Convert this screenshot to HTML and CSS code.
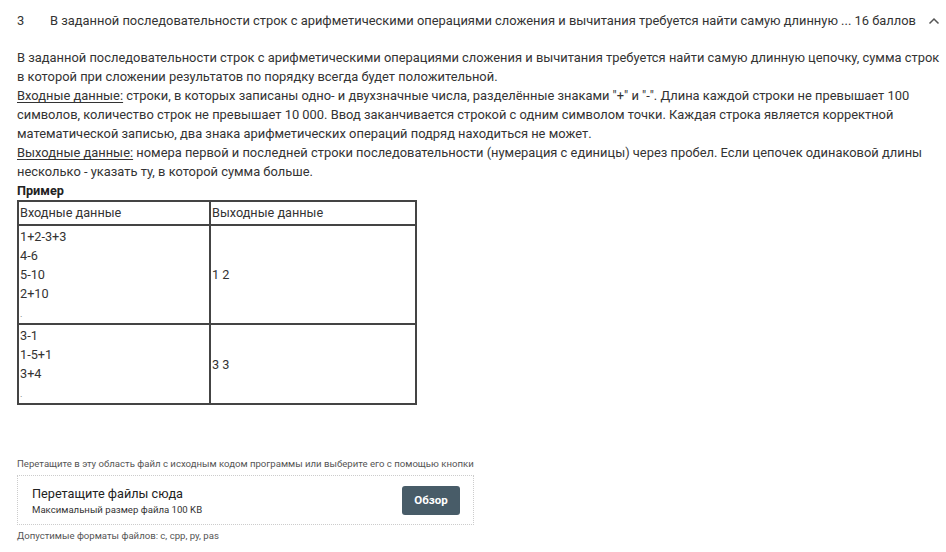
FILE: index.html
```html
<!DOCTYPE html>
<html lang="ru">
<head>
<meta charset="utf-8">
<link rel="stylesheet" href="styles.css">
</head>
<body>
<div class="task">
  <div class="task-head">
    <span class="num">3</span>
    <span class="title">В заданной последовательности строк с арифметическими операциями сложения и вычитания требуется найти самую длинную ...</span>
    <span class="score">16 баллов</span>
    <svg class="chev" width="12" height="8" viewBox="0 0 12 8"><path d="M1.5 6.5 L6 2 L10.5 6.5" fill="none" stroke="#555" stroke-width="1.5"/></svg>
  </div>
  <div class="task-body">
    <p class="text">В заданной последовательности строк с арифметическими операциями сложения и вычитания требуется найти самую длинную цепочку, сумма строк в которой при сложении результатов по порядку всегда будет положительной.<br><u>Входные данные:</u> строки, в которых записаны одно- и двухзначные числа, разделённые знаками "+" и "-". Длина каждой строки не превышает 100 символов, количество строк не превышает 10 000. Ввод заканчивается строкой с одним символом точки. Каждая строка является корректной математической записью, два знака арифметических операций подряд находиться не может.<br><u>Выходные данные:</u> номера первой и последней строки последовательности (нумерация с единицы) через пробел. Если цепочек одинаковой длины несколько - указать ту, в которой сумма больше.</p>
    <div class="example-title">Пример</div>
    <table class="example">
      <tr class="hrow"><td class="c1">Входные данные</td><td class="c2">Выходные данные</td></tr>
      <tr><td class="c1">1+2-3+3<br>4-6<br>5-10<br>2+10<br><span class="dot">.</span></td><td class="c2">1 2</td></tr>
      <tr><td class="c1">3-1<br>1-5+1<br>3+4<br><span class="dot">.</span></td><td class="c2">3 3</td></tr>
    </table>
  </div>
  <div class="upload">
    <div class="hint">Перетащите в эту область файл с исходным кодом программы или выберите его с помощью кнопки</div>
    <div class="drop">
      <div class="drop-text">
        <div class="drop-title">Перетащите файлы сюда</div>
        <div class="drop-sub">Максимальный размер файла 100 KB</div>
      </div>
      <button class="browse">Обзор</button>
    </div>
    <div class="hint formats">Допустимые форматы файлов: c, cpp, py, pas</div>
  </div>
</div>
</body>
</html>
```
FILE: styles.css
```css
html, body { margin: 0; padding: 0; background: #fff; }
body { font-family: Roboto, "Noto Sans", sans-serif; color: #333; }
.task { padding: 0 6px 0 17px; }
.task-head { display: flex; align-items: center; height: 41px; font-size: 12.9px; color: #333; }
.num { width: 33px; flex: none; }
.title { flex: none; white-space: nowrap; }
.score { margin-left: auto; flex: none; white-space: nowrap; }
.chev { margin-left: 12px; margin-right: 0; flex: none; }
.task-body { padding-top: 7px; }
.text { margin: 0; font-size: 12.9px; line-height: 19px; color: #333; }
.text u { text-decoration-thickness: 1px; text-underline-offset: 2px; }
.example-title { font-weight: bold; font-size: 12.7px; line-height: 19px; color: #222; }
.example { border-collapse: collapse; width: 400px; font-size: 12.7px; color: #333; }
.example td { border: 2px solid #444; padding: 1px 1px; line-height: 19px; vertical-align: middle; }
.example td.c1 { width: 188px; }
.hrow td { padding: 1px 1px 2px; }
.dot { font-size: 9px; line-height: 1; color: #666; }
.upload { margin-top: 52px; }
.hint { font-size: 9.6px; color: #555; line-height: 14px; }
.drop { margin-top: 4px; width: 457px; height: 50px; border: 1px dotted #ccc; display: flex; align-items: center; justify-content: space-between; box-sizing: border-box; padding: 0 13px 0 14px; }
.drop-title { font-size: 12.7px; color: #222; line-height: 16px; }
.drop-sub { font-size: 9.6px; color: #333; margin-top: 2px; }
.browse { background: #485c68; color: #fff; border: none; border-radius: 3px; font-family: Roboto, sans-serif; font-weight: bold; font-size: 11.5px; width: 58px; height: 29px; padding: 0; }
.formats { margin-top: 4px; }
```
